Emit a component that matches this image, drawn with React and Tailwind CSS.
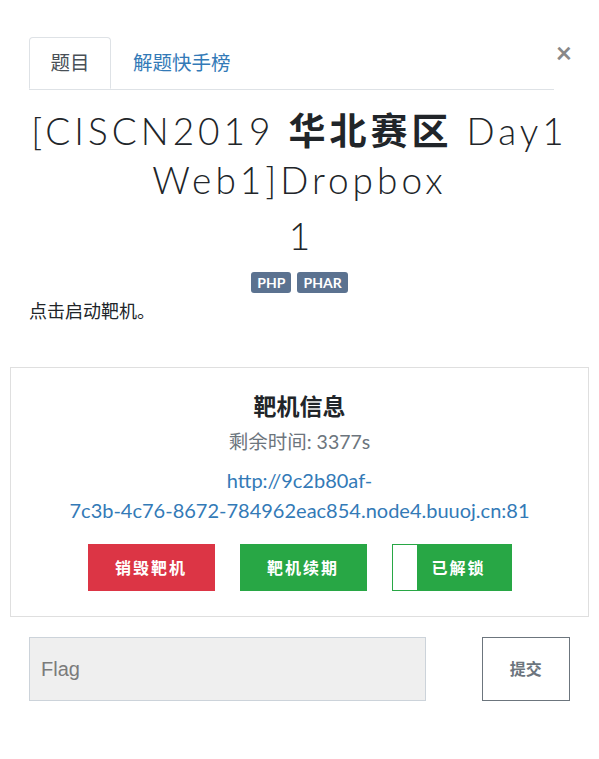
export default function App() {
  return (
    <div className="min-h-[759px] bg-white font-['Lato','Noto_Sans_CJK_SC',sans-serif] text-[#212529]">
      <div className="relative px-[29px] pt-[37px]">
        {/* TABS */}
        <div className="mr-[16px] flex border-b border-[#dee2e6]">
          <div className="-mb-px flex h-[52px] w-[82px] items-center justify-center rounded-t-[4px] border border-b-white border-[#dee2e6] text-[19.5px] text-[#495057]">
            题目
          </div>
          <div className="flex h-[52px] items-center px-[22px] text-[19.5px] text-[#337ab7]">
            解题快手榜
          </div>
        </div>
        <button className="absolute right-[27px] top-[38px] text-[28px] font-bold leading-none text-[#888]">
          ×
        </button>

        {/* TITLE */}
        <h1 className="mt-[16px] text-center text-[37px] font-light leading-[49px] tracking-[4px] text-[#212529]">
          [CISCN2019 <span className="font-bold">华北赛区</span> Day1 Web1]Dropbox
        </h1>
        <div className="mt-[9px] text-center text-[37px] font-light leading-[46px]">1</div>
        <div className="mt-[13px] flex justify-center gap-[6px]">
          <span className="rounded-[3px] bg-[#5b7290] px-[6px] text-[14px] font-bold leading-[21px] text-white">
            PHP
          </span>
          <span className="rounded-[3px] bg-[#5b7290] px-[6px] text-[14px] font-bold leading-[21px] text-white">
            PHAR
          </span>
        </div>
        <p className="mt-[5px] text-[18px] leading-[26px]">点击启动靶机。</p>
      </div>

      {/* TARGET INFO */}
      <div className="mx-[10px] mt-[43px] border border-[#dfdfdf] px-4 pb-[25px] pt-[23px] text-center">
        <div className="text-[23px] font-bold leading-[30px]">靶机信息</div>
        <div className="mt-[9px] text-[19.5px] leading-[24px] text-[#6c757d]">剩余时间: 3377s</div>
        <a className="mt-[11px] block text-[20px] leading-[30px] text-[#337ab7]">
          http://9c2b80af-
          <br />
          7c3b-4c76-8672-784962eac854.node4.buuoj.cn:81
        </a>
        <div className="mt-[19px] flex justify-center gap-[25px]">
          <button className="h-[47px] w-[127px] bg-[#dc3545] text-[16px] font-bold tracking-[2px] text-white">
            销毁靶机
          </button>
          <button className="h-[47px] w-[127px] bg-[#28a745] text-[16px] font-bold tracking-[2px] text-white">
            靶机续期
          </button>
          <button className="flex h-[47px] w-[120px] border border-[#28a745] bg-[#28a745]">
            <span className="h-full w-[24px] bg-white" />
            <span className="flex flex-1 items-center justify-center pr-[10px] text-[16px] font-bold tracking-[2px] text-white">
              已解锁
            </span>
          </button>
        </div>
      </div>

      {/* FLAG */}
      <div className="mt-[20px] flex items-center px-[29px]">
        <input
          placeholder="Flag"
          className="h-[64px] w-[399px] border border-[#ccd3da] bg-[#efefef] px-[11px] font-['Liberation_Sans',sans-serif] text-[20px] text-[#495057] placeholder:text-[#7b7b7b]"
        />
        <button className="ml-[56px] h-[64px] w-[89px] border border-[#6c757d] text-[16px] font-bold text-[#6c757d]">
          提交
        </button>
      </div>
    </div>
  );
}
